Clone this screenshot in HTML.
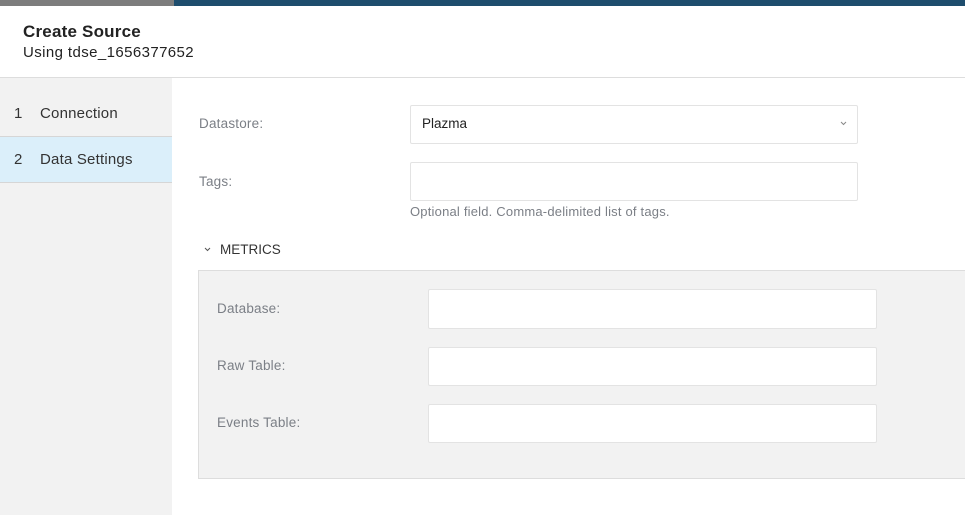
<!DOCTYPE html><html><head><style>
body{margin:0;width:965px;height:515px;position:relative;overflow:hidden;background:#fff;font-family:"Liberation Sans",sans-serif;}
div{position:absolute;box-sizing:border-box}
.lbl{font-size:13.5px;color:#7b7f86;letter-spacing:0.2px}
.inp{background:#fff;border:1px solid #e3e3e3;border-radius:2px}
</style></head><body>
<div style="left:0;top:0;width:174px;height:6px;background:#7d7d7d"></div>
<div style="left:174px;top:0;width:791px;height:6px;background:#1e4d6d"></div>
<div style="left:23px;top:22px;font-size:17px;font-weight:bold;color:#222;letter-spacing:0.2px">Create Source</div>
<div style="left:23px;top:44px;font-size:15px;color:#222;letter-spacing:0.4px">Using tdse_1656377652</div>
<div style="left:0;top:77px;width:965px;height:1px;background:#ddd"></div>
<div style="left:0;top:78px;width:172px;height:437px;background:#f2f2f2"></div>
<div style="left:0;top:136px;width:172px;height:1px;background:#d6d6d6"></div>
<div style="left:0;top:137px;width:172px;height:45px;background:#dbeffa"></div>
<div style="left:0;top:182px;width:172px;height:1px;background:#d6d6d6"></div>
<div style="left:14px;top:105px;font-size:15px;color:#333">1</div>
<div style="left:40px;top:105px;font-size:15px;color:#333;letter-spacing:0.2px">Connection</div>
<div style="left:14px;top:151px;font-size:15px;color:#333">2</div>
<div style="left:40px;top:151px;font-size:15px;color:#333;letter-spacing:0.2px">Data Settings</div>
<div class="lbl" style="left:199px;top:116px">Datastore:</div>
<div class="inp" style="left:410px;top:105px;width:448px;height:39px"></div>
<div style="left:422px;top:116px;font-size:13.5px;color:#222">Plazma</div>
<svg style="position:absolute;left:840px;top:121px" width="7" height="5"><path d="M1 1l2.5 2.5L6 1" stroke="#888" fill="none"/></svg>
<div class="lbl" style="left:199px;top:174px">Tags:</div>
<div class="inp" style="left:410px;top:162px;width:448px;height:39px"></div>
<div class="lbl" style="left:410px;top:204px;font-size:13px">Optional field. Comma-delimited list of tags.</div>
<svg style="position:absolute;left:204px;top:247px" width="7" height="5"><path d="M1 1l2.5 2.5L6 1" stroke="#555" fill="none"/></svg>
<div style="left:220px;top:242px;font-size:13.5px;color:#333">METRICS</div>
<div style="left:198px;top:270px;width:780px;height:209px;background:#f2f2f2;border:1px solid #ddd"></div>
<div class="lbl" style="left:217px;top:301px">Database:</div>
<div class="inp" style="left:428px;top:289px;width:449px;height:40px"></div>
<div class="lbl" style="left:217px;top:358px">Raw Table:</div>
<div class="inp" style="left:428px;top:347px;width:449px;height:39px"></div>
<div class="lbl" style="left:217px;top:415px">Events Table:</div>
<div class="inp" style="left:428px;top:404px;width:449px;height:39px"></div>
</body></html>
